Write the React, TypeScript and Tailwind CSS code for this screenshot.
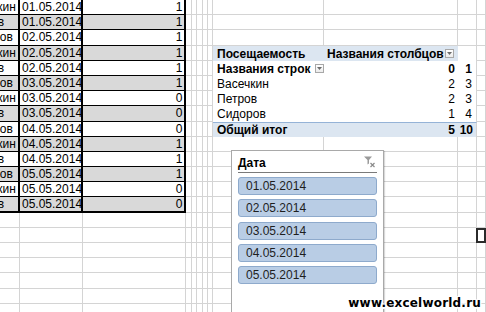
import React from 'react'

const names = ['Васечкин', 'Петров', 'Сидоров']

const rows: [string, number][] = [
  ['01.05.2014', 1],
  ['01.05.2014', 1],
  ['02.05.2014', 1],
  ['02.05.2014', 1],
  ['02.05.2014', 1],
  ['03.05.2014', 1],
  ['03.05.2014', 0],
  ['03.05.2014', 0],
  ['04.05.2014', 0],
  ['04.05.2014', 1],
  ['04.05.2014', 1],
  ['05.05.2014', 1],
  ['05.05.2014', 0],
  ['05.05.2014', 0],
]

const pivot: [string, number, number][] = [
  ['Васечкин', 2, 3],
  ['Петров', 2, 3],
  ['Сидоров', 1, 4],
]

const slicerDates = ['01.05.2014', '02.05.2014', '03.05.2014', '04.05.2014', '05.05.2014']

const grid = 'shrink-0 border-r border-b border-[#d4d4d4]'

function Dropdown() {
  return (
    <span className="shrink-0 w-[9px] h-[9px] border border-[#a8a8a8] bg-gradient-to-b from-white to-[#ececec] flex items-center justify-center">
      <svg width="5" height="3" viewBox="0 0 5 3">
        <polygon points="0,0 5,0 2.5,3" fill="#6b6b6b" />
      </svg>
    </span>
  )
}

function Narrow() {
  return (
    <>
      <div className={`${grid} w-[6px]`} />
      <div className={`${grid} w-[5px]`} />
      <div className={`${grid} w-[6px]`} />
      <div className={`${grid} w-[5px]`} />
      <div className={`${grid} w-[5px]`} />
    </>
  )
}

function LeftCells({ i }: { i: number }) {
  if (i < rows.length) {
    const [date, v] = rows[i]
    const grey = i % 2 === 1
    const bg = grey ? 'bg-[#d9d9d9]' : 'bg-white'
    const bb = i === rows.length - 1 ? 'border-b-2' : 'border-b'
    return (
      <>
        <div className={`shrink-0 w-[20px] overflow-hidden border-r-2 border-black ${bb} ${bg} flex items-center`}>
          <span className="ml-[-36px] whitespace-nowrap">{names[i % 3]}</span>
        </div>
        <div className={`shrink-0 w-[63px] overflow-hidden border-r-2 border-black ${bb} ${bg} flex items-center pl-[2px]`}>
          {date}
        </div>
        <div className={`shrink-0 w-[103px] border-r-2 border-black ${bb} ${bg} flex items-center justify-end pr-[1.5px]`}>
          {v}
        </div>
      </>
    )
  }
  return (
    <>
      <div className={`${grid} w-[20px]`} />
      <div className={`${grid} w-[63px]`} />
      <div className={`${grid} w-[103px]`} />
    </>
  )
}

function PivotCells({ i }: { i: number }) {
  if (i === 3) {
    return (
      <>
        <div className="shrink-0 w-[111px] bg-[#dce6f1] flex items-center pl-[4px] pt-px font-bold">Посещаемость</div>
        <div className="shrink-0 w-[134px] bg-[#dce6f1] flex items-center justify-between pl-[3px] pr-[4px] pt-px font-bold">
          <span>Названия столбцов</span>
          <Dropdown />
        </div>
        <div className="shrink-0 w-[19px] bg-white border-r border-[#d4d4d4]" />
      </>
    )
  }
  if (i === 4) {
    return (
      <>
        <div className="shrink-0 w-[111px] flex items-center gap-[4px] pl-[4px] pt-px font-bold">
          <span>Названия строк</span>
          <Dropdown />
        </div>
        <div className="shrink-0 w-[134px] flex items-center justify-end pr-[3px] pt-px font-bold">0</div>
        <div className="shrink-0 w-[19px] border-r border-[#d4d4d4] flex items-center justify-end pr-[4px] pt-px font-bold">1</div>
      </>
    )
  }
  if (i >= 5 && i <= 7) {
    const [n, a, b] = pivot[i - 5]
    return (
      <>
        <div className="shrink-0 w-[111px] flex items-center pl-[4px] pt-px">{n}</div>
        <div className="shrink-0 w-[134px] flex items-center justify-end pr-[3px] pt-px">{a}</div>
        <div className="shrink-0 w-[19px] border-r border-[#d4d4d4] flex items-center justify-end pr-[4px] pt-px">{b}</div>
      </>
    )
  }
  if (i === 8) {
    return (
      <>
        <div className="shrink-0 w-[111px] bg-[#dce6f1] border-t border-[#95b3d7] flex items-center pl-[4px] font-bold">
          Общий итог
        </div>
        <div className="shrink-0 w-[134px] bg-[#dce6f1] border-t border-[#95b3d7] flex items-center justify-end pr-[3px] font-bold">
          5
        </div>
        <div className="shrink-0 w-[19px] bg-[#dce6f1] border-t border-[#95b3d7] border-r border-r-[#d4d4d4] flex items-center justify-end pr-[3px] font-bold">
          10
        </div>
      </>
    )
  }
  return (
    <>
      <div className={`${grid} w-[111px]`} />
      <div className={`${grid} w-[134px]`} />
      <div className={`${grid} w-[19px]`} />
    </>
  )
}

function SheetRow({ i }: { i: number }) {
  return (
    <div className="flex h-[15.2px] shrink-0">
      <LeftCells i={i} />
      <Narrow />
      <PivotCells i={i} />
      {i === 15 ? (
        <div className="flex-1 border-2 border-[#2b2b2b] ml-[-1px]" />
      ) : (
        <div className={`${grid} flex-1`} />
      )}
    </div>
  )
}

function ClearFilterIcon() {
  return (
    <svg width="13" height="13" viewBox="0 0 13 13">
      <path d="M1 1.5 H9 L6 5 V8.5 L4.5 9.5 V5 Z" fill="#9a9a9a" />
      <path d="M7.5 8 L11.5 12 M11.5 8 L7.5 12" stroke="#8a8a8a" strokeWidth="1.2" />
    </svg>
  )
}

function Slicer() {
  return (
    <div className="absolute left-[231px] top-[150px] w-[153px] h-[175px] bg-white border border-[#a9a9a9] shadow-[1px_1px_1px_rgba(0,0,0,0.15)] px-[6px]">
      <div className="h-[22px] flex items-center justify-between pt-[2px] border-b border-[#7a7a7a]">
        <span className="font-bold">Дата</span>
        <span className="mr-[1px] mb-[2px]">
          <ClearFilterIcon />
        </span>
      </div>
      <div className="flex flex-col gap-[4.3px] mt-[4px]">
        {slicerDates.map((d) => (
          <div
            key={d}
            className="h-[18px] rounded-[3px] border border-[#8eaacc] bg-[#b9cde5] flex items-center pl-[7px] text-[#1e1e1e]"
          >
            {d}
          </div>
        ))}
      </div>
    </div>
  )
}

export default function App() {
  return (
    <div className="relative w-[486px] h-[312px] overflow-hidden bg-white text-black text-[12px] leading-none font-['Liberation_Sans',Arial,sans-serif]">
      <div className="flex flex-col">
        {Array.from({ length: 21 }, (_, i) => (
          <SheetRow key={i} i={i} />
        ))}
      </div>
      <Slicer />
      <div className="absolute right-[5px] bottom-[3px] font-['DejaVu_Sans',sans-serif] font-bold text-[12px] tracking-[0.2px] text-black [text-shadow:1.5px_0_0_#fff,-1.5px_0_0_#fff,0_1.5px_0_#fff,0_-1.5px_0_#fff,1px_1px_0_#fff,-1px_-1px_0_#fff,1px_-1px_0_#fff,-1px_1px_0_#fff]">
        www.excelworld.ru
      </div>
    </div>
  )
}
